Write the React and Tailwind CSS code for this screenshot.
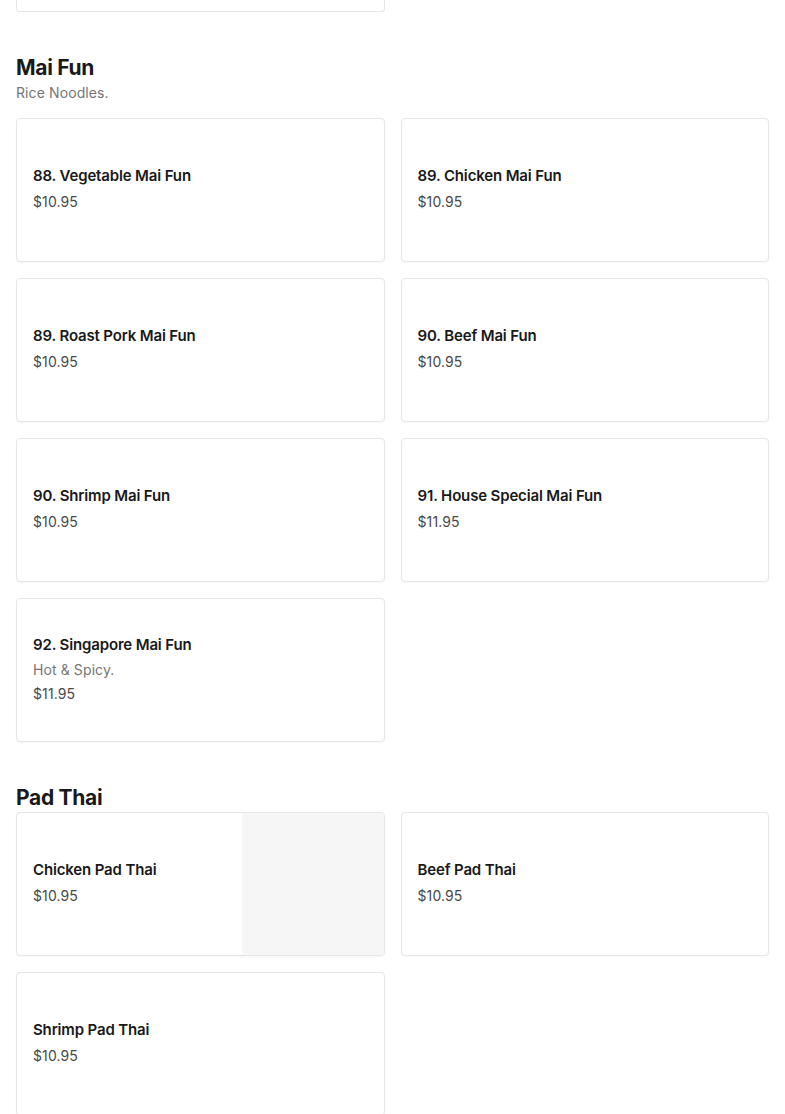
const font = { fontFamily: "Inter, 'Noto Sans', sans-serif" };

function Card({ title, price, desc, image }) {
  return (
    <div className="flex h-[144px] overflow-hidden rounded-[4px] border border-[#e6e6e6] bg-white shadow-[0_1px_2px_rgba(0,0,0,0.04)]">
      <div className="flex flex-1 flex-col justify-center px-4 pb-[2px]">
        <div className="text-[15px] font-semibold leading-[20px] tracking-[-0.15px] text-[#191919]">{title}</div>
        {desc && <div className="mt-[5px] text-[14px] leading-[20px] tracking-[0.1px] text-[#767676]">{desc}</div>}
        <div className={(desc ? "mt-[4px]" : "mt-[6px]") + " text-[14px] leading-[20px] tracking-[0.1px] text-[#494949]"}>{price}</div>
      </div>
      {image && <div className="w-[142px] bg-[#f6f6f6]" />}
    </div>
  );
}

export default function App() {
  return (
    <div className="min-h-[1114px] bg-white px-4" style={font}>
      <div className="grid grid-cols-2 gap-4">
        <div className="h-[12px] rounded-b-[4px] border-x border-b border-[#e6e6e6]" />
      </div>
      <div className="mt-[42px]">
        <h2 className="text-[21px] font-bold leading-[28px] tracking-[-0.3px] text-[#191919]">Mai Fun</h2>
        <p className="mt-[1px] text-[14px] leading-[20px] tracking-[0.1px] text-[#767676]">Rice Noodles.</p>
      </div>
      <div className="mt-[15px] grid grid-cols-2 gap-4">
        <Card title="88. Vegetable Mai Fun" price="$10.95" />
        <Card title="89. Chicken Mai Fun" price="$10.95" />
        <Card title="89. Roast Pork Mai Fun" price="$10.95" />
        <Card title="90. Beef Mai Fun" price="$10.95" />
        <Card title="90. Shrimp Mai Fun" price="$10.95" />
        <Card title="91. House Special Mai Fun" price="$11.95" />
        <Card title="92. Singapore Mai Fun" desc="Hot & Spicy." price="$11.95" />
      </div>
      <div className="mt-[42px]">
        <h2 className="text-[21px] font-bold leading-[28px] tracking-[-0.3px] text-[#191919]">Pad Thai</h2>
      </div>
      <div className="grid grid-cols-2 gap-4">
        <Card title="Chicken Pad Thai" price="$10.95" image />
        <Card title="Beef Pad Thai" price="$10.95" />
        <Card title="Shrimp Pad Thai" price="$10.95" />
      </div>
    </div>
  );
}
